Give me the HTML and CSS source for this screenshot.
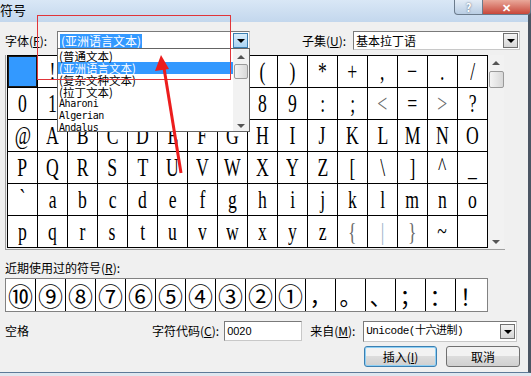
FILE: index.html
```html
<!DOCTYPE html>
<html lang="zh">
<head>
  <meta charset="UTF-8" />
  <title>符号</title>
  <link rel="stylesheet" href="styles.css">
</head>
<body>
<div class="window">
  <div class="titlebar">
    <span class="title">符号</span>
    <div class="caption-btns">
      <span class="help">?</span>
      <span class="close">✕</span>
    </div>
  </div>

  <div class="content">
    <div class="row font-row">
      <span class="lbl font-lbl">字体(<u>F</u>):</span>
      <div class="combo font-combo"><span class="sel">(亚洲语言文本)</span><span class="drop hot"><i></i></span></div>
      <span class="lbl subset-lbl">子集(<u>U</u>):</span>
      <div class="combo subset-combo"><span class="val">基本拉丁语</span><span class="drop"><i></i></span></div>
    </div>

    <div class="grid-frame">
      <div class="grid">
        <div class="cell on"><span> </span></div><div class="cell"><span>!</span></div><div class="cell"><span>&quot;</span></div><div class="cell"><span>#</span></div><div class="cell"><span>$</span></div><div class="cell"><span>%</span></div><div class="cell"><span>&amp;</span></div><div class="cell"><span>'</span></div><div class="cell"><span>(</span></div><div class="cell"><span>)</span></div><div class="cell"><span>*</span></div><div class="cell"><span>+</span></div><div class="cell"><span>,</span></div><div class="cell"><span>−</span></div><div class="cell"><span>.</span></div><div class="cell"><span>/</span></div>
        <div class="cell"><span>0</span></div><div class="cell"><span>1</span></div><div class="cell"><span>2</span></div><div class="cell"><span>3</span></div><div class="cell"><span>4</span></div><div class="cell"><span>5</span></div><div class="cell"><span>6</span></div><div class="cell"><span>7</span></div><div class="cell"><span>8</span></div><div class="cell"><span>9</span></div><div class="cell"><span>:</span></div><div class="cell"><span>;</span></div><div class="cell dim"><span>&lt;</span></div><div class="cell"><span>=</span></div><div class="cell dim"><span>&gt;</span></div><div class="cell"><span>?</span></div>
        <div class="cell"><span>@</span></div><div class="cell"><span>A</span></div><div class="cell"><span>B</span></div><div class="cell"><span>C</span></div><div class="cell"><span>D</span></div><div class="cell"><span>E</span></div><div class="cell"><span>F</span></div><div class="cell"><span>G</span></div><div class="cell"><span>H</span></div><div class="cell"><span>I</span></div><div class="cell"><span>J</span></div><div class="cell"><span>K</span></div><div class="cell"><span>L</span></div><div class="cell"><span>M</span></div><div class="cell"><span>N</span></div><div class="cell"><span>O</span></div>
        <div class="cell"><span>P</span></div><div class="cell"><span>Q</span></div><div class="cell"><span>R</span></div><div class="cell"><span>S</span></div><div class="cell"><span>T</span></div><div class="cell"><span>U</span></div><div class="cell"><span>V</span></div><div class="cell"><span>W</span></div><div class="cell"><span>X</span></div><div class="cell"><span>Y</span></div><div class="cell"><span>Z</span></div><div class="cell"><span>[</span></div><div class="cell"><span>\</span></div><div class="cell"><span>]</span></div><div class="cell top"><span>^</span></div><div class="cell"><span>_</span></div>
        <div class="cell top"><span>`</span></div><div class="cell"><span>a</span></div><div class="cell"><span>b</span></div><div class="cell"><span>c</span></div><div class="cell"><span>d</span></div><div class="cell"><span>e</span></div><div class="cell"><span>f</span></div><div class="cell"><span>g</span></div><div class="cell"><span>h</span></div><div class="cell"><span>i</span></div><div class="cell"><span>j</span></div><div class="cell"><span>k</span></div><div class="cell"><span>l</span></div><div class="cell"><span>m</span></div><div class="cell"><span>n</span></div><div class="cell"><span>o</span></div>
        <div class="cell"><span>p</span></div><div class="cell"><span>q</span></div><div class="cell"><span>r</span></div><div class="cell"><span>s</span></div><div class="cell"><span>t</span></div><div class="cell"><span>u</span></div><div class="cell"><span>v</span></div><div class="cell"><span>w</span></div><div class="cell"><span>x</span></div><div class="cell"><span>y</span></div><div class="cell"><span>z</span></div><div class="cell dim"><span>{</span></div><div class="cell bar"><span>|</span></div><div class="cell dim"><span>}</span></div><div class="cell top"><span>~</span></div><div class="cell"><span> </span></div>
      </div>
      <div class="vscroll">
        <span class="arrow up"></span>
        <span class="thumb"></span>
        <span class="arrow down"></span>
      </div>
    </div>

    <div class="recent-lbl">近期使用过的符号(<u>R</u>):</div>
    <div class="recent">
      <div class="rcell">⑩</div><div class="rcell">⑨</div><div class="rcell">⑧</div><div class="rcell">⑦</div><div class="rcell">⑥</div><div class="rcell">⑤</div><div class="rcell">④</div><div class="rcell">③</div><div class="rcell">②</div><div class="rcell">①</div><div class="rcell p">，</div><div class="rcell p">。</div><div class="rcell p">、</div><div class="rcell p">；</div><div class="rcell p">：</div><div class="rcell p">！</div>
    </div>

    <div class="row code-row">
      <span class="lbl name-lbl">空格</span>
      <span class="lbl">字符代码(<u>C</u>):</span>
      <div class="field code-field">0020</div>
      <span class="lbl from-lbl">来自(<u>M</u>):</span>
      <div class="combo from-combo"><span class="val mono">Unicode(十六进制)</span><span class="drop"><i></i></span></div>
    </div>

    <div class="row btn-row">
      <button class="btn default">插入(<u>I</u>)</button>
      <button class="btn">取消</button>
    </div>
  </div>
</div>

<!-- opened font list, drawn over the grid -->
<div class="font-list">
  <div class="items">
    <div class="item">(普通文本)</div>
    <div class="item picked">(亚洲语言文本)</div>
    <div class="item">(复杂文种文本)</div>
    <div class="item">(拉丁文本)</div>
    <div class="item latin">Aharoni</div>
    <div class="item latin">Algerian</div>
    <div class="item latin">Andalus</div>
  </div>
  <div class="vscroll small">
    <span class="arrow up"></span>
    <span class="thumb"></span>
    <span class="arrow down"></span>
  </div>
</div>

<!-- red annotation -->
<div class="mark-box"></div>
<svg class="mark-arrow" width="531" height="376" viewBox="0 0 531 376">
  <line x1="181" y1="173" x2="164" y2="68" stroke="#ec1d1d" stroke-width="3" />
  <polygon points="161,55 155,71 169,69" fill="#ec1d1d" />
</svg>
</body>
</html>
```

FILE: styles.css
```css
* {
  box-sizing: border-box;
}

body {
  margin: 0;
  width: 531px;
  height: 376px;
  overflow: hidden;
  position: relative;
  background: #dfe7ef;
  font-family: "Noto Sans CJK SC", sans-serif;
  font-size: 12px;
  color: #000;
}

u {
  text-decoration: underline;
}

.window {
  width: 531px;
  height: 373px;
  background: #f0f0f0;
  border-right: 3px solid #4b5563;
  border-bottom: 1px solid #5d7a98;
}

/* title bar */
.titlebar {
  height: 22px;
  display: flex;
  justify-content: space-between;
  align-items: flex-start;
  background: linear-gradient(#d9e7f6, #c3d7ed);
}

.title {
  margin-left: 0;
  margin-top: 2px;
  font-size: 13px;
  line-height: 16px;
}

.caption-btns {
  display: flex;
  margin-right: -3px;
}

.caption-btns span {
  height: 15px;
  display: flex;
  align-items: center;
  justify-content: center;
  font-size: 11px;
  line-height: 11px;
  border: 1px solid #6b7b8c;
  border-top: none;
}

.help {
  width: 29px;
  color: #fff;
  font-weight: bold;
  background: linear-gradient(#e3ecf6, #b9cde3);
  border-radius: 0 0 0 4px;
  text-shadow: 0 0 2px #44556a;
}

.close {
  width: 48px;
  color: #fff;
  font-weight: bold;
  background: linear-gradient(#e9a89a, #c8473a);
  border-left: none !important;
  border-radius: 0 0 4px 0;
}

/* dialog content */
.content {
  padding: 9px 8px 0 5px;
}

.row {
  display: flex;
  align-items: center;
}

.lbl {
  font-size: 12px;
  line-height: 14px;
  white-space: nowrap;
}

.font-row {
  height: 19px;
}

.font-lbl {
  width: 52px;
}

.subset-lbl {
  margin-left: 52px;
  width: 51px;
}

.combo {
  height: 19px;
  display: flex;
  align-items: center;
  justify-content: space-between;
  background: #fff;
  border: 1px solid #7a7a7a;
  border-right-color: #c8c8c8;
  border-bottom-color: #c8c8c8;
  padding: 0 1px 0 2px;
}

.font-combo {
  width: 193px;
}

.subset-combo {
  width: 167px;
}

.sel {
  background: #3399ff;
  color: #fff;
  line-height: 14px;
  padding: 0 1px;
}

.val {
  line-height: 14px;
}

.mono {
  font-family: "Liberation Mono", "Noto Sans CJK SC", monospace;
  font-size: 11px;
  letter-spacing: -0.5px;
}

.drop {
  width: 15px;
  height: 15px;
  display: flex;
  align-items: center;
  justify-content: center;
  border: 1px solid #707070;
  background: linear-gradient(#f3f3f3, #d6d6d6);
}

.drop.hot {
  background: linear-gradient(#d9edfb, #a9d3f3);
  border-color: #3c7fb1;
}

.drop i {
  width: 0;
  height: 0;
  border-left: 4px solid transparent;
  border-right: 4px solid transparent;
  border-top: 4px solid #000;
  margin-top: 1px;
}

/* character grid */
.grid-frame {
  margin-top: 5px;
  display: flex;
  width: 500px;
  padding-left: 1px;
  padding-bottom: 1px;
  border-left: 1px solid #a0a0a0;
  border-bottom: 1px solid #a0a0a0;
}

.grid {
  display: grid;
  grid-template-columns: repeat(16, 30px);
  grid-auto-rows: 32px;
  width: 481px;
  border-left: 1px solid #000;
  border-top: 1px solid #000;
  background: #fff;
}

.cell {
  border-right: 1px solid #000;
  border-bottom: 1px solid #000;
  display: flex;
  align-items: center;
  justify-content: center;
  font-family: "Liberation Serif", serif;
  font-size: 26px;
  line-height: 26px;
  overflow: hidden;
}

.cell span {
  display: inline-block;
  transform: scaleX(0.68);
}

.cell.on {
  background: #3399ff;
  box-shadow: inset 0 0 0 1px #1a1a1a;
}

.cell.dim {
  color: #6a6a6a;
}

.cell.bar {
  color: #9bb4c8;
}

.cell.top {
  align-items: flex-start;
  padding-top: 2px;
}

.vscroll {
  width: 16px;
  display: flex;
  flex-direction: column;
  align-items: center;
  background: #f2f2f2;
  padding: 6px 0 4px;
}

.vscroll .thumb {
  width: 15px;
  height: 17px;
  margin-top: 6px;
  border: 1px solid #9a9a9a;
  border-radius: 2px;
  background: linear-gradient(to right, #f4f4f4, #d8d8d8);
}

.vscroll .down {
  margin-top: auto;
}

.arrow {
  width: 0;
  height: 0;
  border-left: 4px solid transparent;
  border-right: 4px solid transparent;
}

.arrow.up {
  border-bottom: 4px solid #555;
}

.arrow.down {
  border-top: 4px solid #555;
}

/* recent symbols */
.recent-lbl {
  margin-top: 11px;
  line-height: 14px;
}

.recent {
  margin-top: 3px;
  display: flex;
  width: 483px;
  height: 34px;
  border: 1px solid #828282;
  background: #fff;
}

.rcell {
  width: 30px;
  height: 32px;
  border-right: 1px solid #000;
  display: flex;
  align-items: center;
  justify-content: center;
  font-size: 25px;
  line-height: 32px;
}

.rcell:last-child {
  border-right: none;
}

.rcell.p {
  font-size: 22px;
}

/* code / source row */
.code-row {
  margin-top: 9px;
  height: 20px;
}

.name-lbl {
  width: 147px;
}

.field {
  height: 20px;
  margin-left: 5px;
  width: 78px;
  background: #fff;
  border: 1px solid #7a7a7a;
  border-right-color: #c8c8c8;
  border-bottom-color: #c8c8c8;
  padding-left: 2px;
  font-family: "Liberation Sans", sans-serif;
  font-size: 11px;
  line-height: 18px;
}

.from-lbl {
  margin-left: 8px;
  width: 53px;
}

.from-combo {
  width: 154px;
  height: 21px;
}

/* buttons */
.btn-row {
  margin-top: 5px;
  justify-content: flex-end;
  gap: 9px;
}

.btn {
  width: 74px;
  height: 21px;
  padding: 0;
  font-family: "Noto Sans CJK SC", sans-serif;
  font-size: 12px;
  line-height: 14px;
  color: #000;
  border: 1px solid #707070;
  border-radius: 3px;
  background: linear-gradient(#f2f2f2 50%, #dcdcdc 50%, #d0d0d0);
}

.btn.default {
  width: 73px;
  border-color: #3c7fb1;
  box-shadow: inset 0 0 0 1px #8ed0f5;
}

/* opened font list */
.font-list {
  position: absolute;
  left: 57px;
  top: 48px;
  width: 193px;
  height: 84px;
  display: flex;
  background: #fff;
  border: 1px solid #646464;
}

.items {
  flex: 1;
  padding-top: 1px;
}

.item {
  height: 12px;
  line-height: 12px;
  font-size: 11.5px;
  padding-left: 1px;
  white-space: nowrap;
}

.item.picked {
  background: #3399ff;
  color: #fff;
}

.item.latin {
  font-family: "DejaVu Sans Mono", monospace;
  font-size: 10px;
  letter-spacing: -0.4px;
}

.vscroll.small {
  width: 16px;
  padding: 6px 0 3px;
}

.vscroll.small .thumb {
  width: 14px;
  height: 15px;
  margin-top: 5px;
}

/* annotation */
.mark-box {
  position: absolute;
  left: 37px;
  top: 15px;
  width: 194px;
  height: 65px;
  border: 1px solid #e0353a;
}

.mark-arrow {
  position: absolute;
  left: 0;
  top: 0;
  pointer-events: none;
}
```
